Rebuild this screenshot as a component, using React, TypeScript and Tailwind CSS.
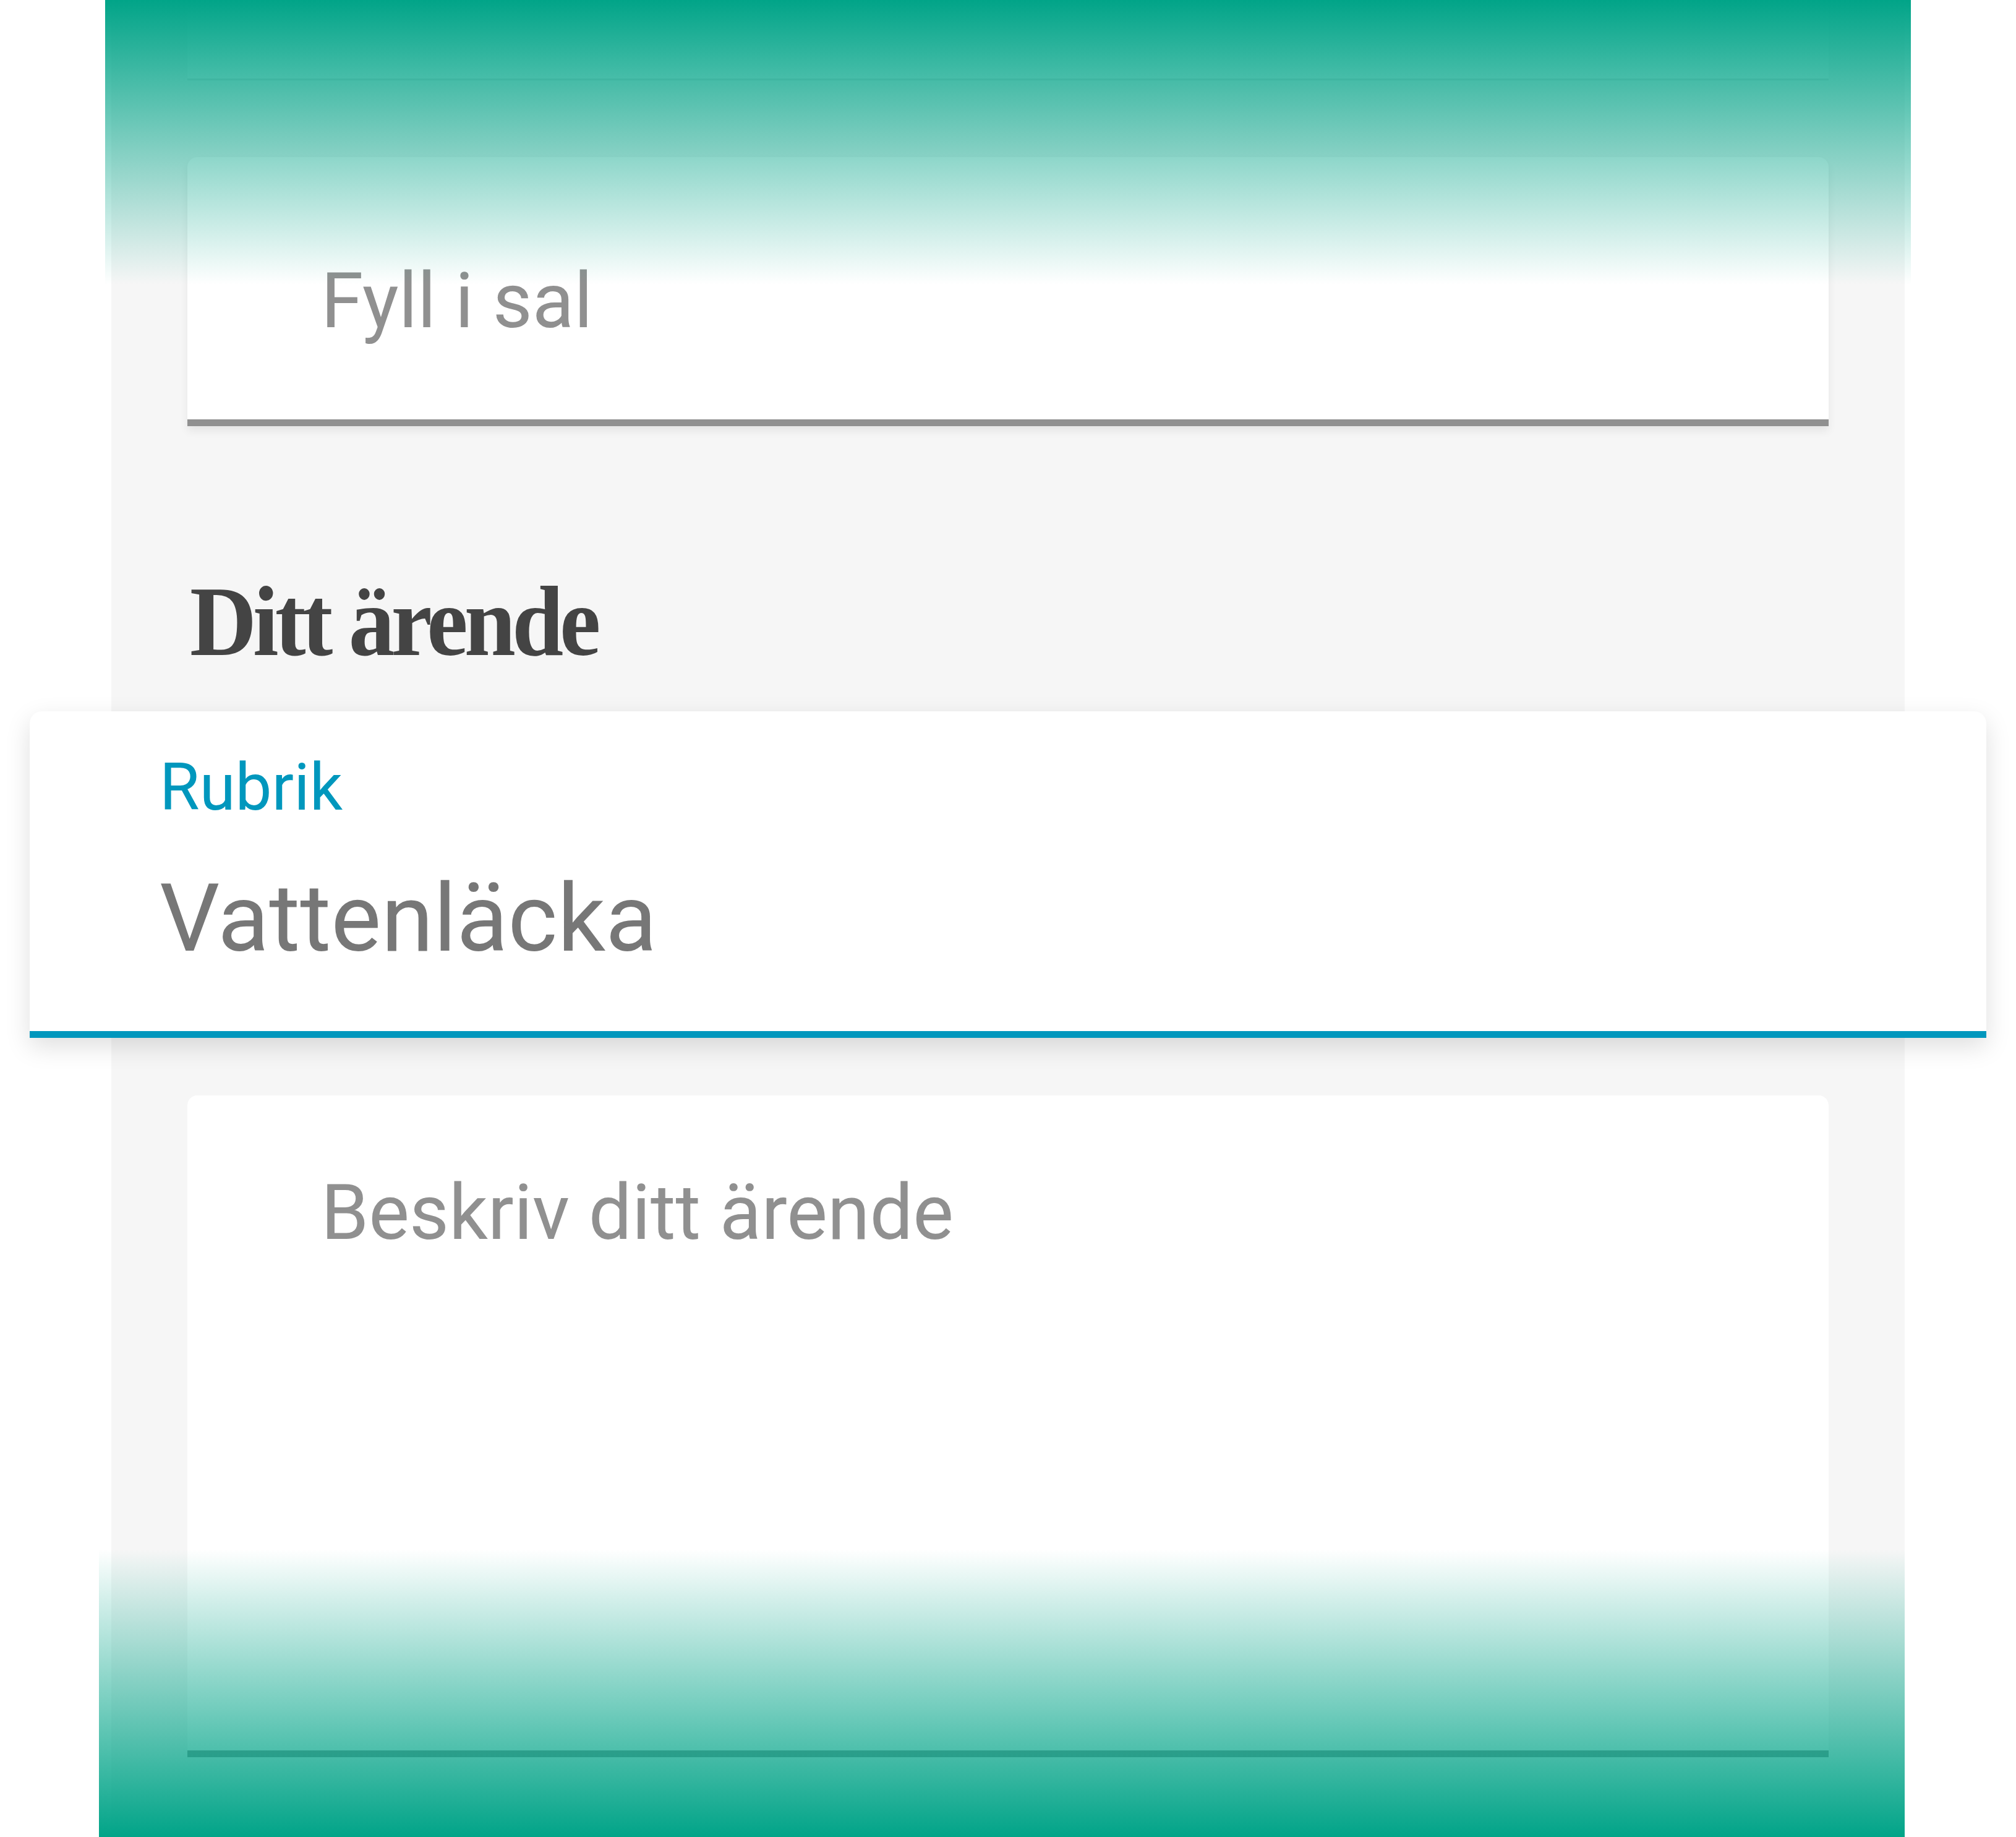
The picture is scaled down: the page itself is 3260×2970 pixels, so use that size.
export default function App() {
  return (
    <div className="relative w-[3260px] h-[2970px] overflow-hidden bg-white font-['Roboto',sans-serif]">
      <div className="ml-[180px] w-[2900px] h-full bg-[#f6f6f6] flex flex-col">
        {/* previous field, mostly under the fade */}
        <div className="mx-[123px] h-[130px] bg-white border-b-[3px] border-[#e2e2e2]" />

        <div className="mx-[123px] mt-[124px] h-[435px] bg-white rounded-t-[16px] border-b-[11px] border-[#909090] shadow-[0_8px_14px_rgba(0,0,0,0.07)] pt-[171px] pl-[216px]">
          <p className="text-[124px] leading-none text-[#909090]">Fyll i sal</p>
        </div>

        <h2 className="mt-[236px] ml-[127px] text-[160px] leading-none font-bold text-[#444] tracking-[-0.04em] font-['Liberation_Serif',serif] origin-left scale-x-[0.935]">
          Ditt ärende
        </h2>

        <div className="relative z-10 mx-[-132px] mt-[65px] h-[528px] bg-white rounded-t-[20px] border-b-[11px] border-[#0097bd] shadow-[0_14px_40px_rgba(0,0,0,0.13)] pt-[71px] pl-[210px]">
          <p className="text-[105px] leading-none text-[#0097bd]">Rubrik</p>
          <p className="mt-[82px] text-[153px] leading-none text-[#777]">Vattenläcka</p>
        </div>

        <div className="mx-[123px] mt-[93px] h-[1070px] bg-white rounded-t-[16px] border-b-[11px] border-[#909090] pt-[128px] pl-[216px]">
          <p className="text-[124px] leading-none text-[#909090]">Beskriv ditt ärende</p>
        </div>
      </div>

      {/* fades over the top and bottom of the form */}
      <div className="absolute left-[170px] top-0 z-20 w-[2920px] h-[460px] bg-gradient-to-b from-[#01a488] to-[#01a48800]" />
      <div className="absolute left-[160px] top-[2505px] z-20 w-[2920px] h-[465px] bg-gradient-to-t from-[#01a488] to-[#01a48800]" />
    </div>
  )
}
